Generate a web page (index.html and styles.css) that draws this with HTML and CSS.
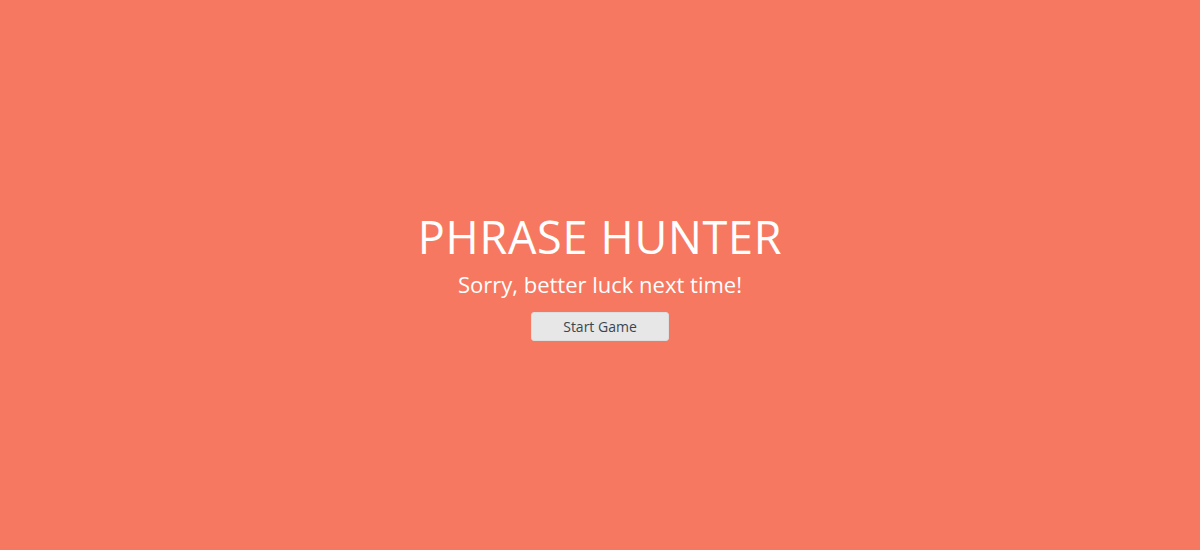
FILE: index.html
```html
<!DOCTYPE html>
<html lang="en">
<head>
<meta charset="utf-8">
<title>Phrase Hunter</title>
<link rel="stylesheet" href="styles.css">
</head>
<body>
<div class="overlay">
  <h2 class="title">PHRASE HUNTER</h2>
  <h1 class="message">Sorry, better luck next time!</h1>
  <button class="btn-reset">Start Game</button>
</div>
</body>
</html>
```

FILE: styles.css
```css
html, body {
  margin: 0;
  padding: 0;
  height: 100%;
}
body {
  font-family: "Open Sans", "Liberation Sans", sans-serif;
  background: #f67860;
}
.overlay {
  height: 100%;
  display: flex;
  flex-direction: column;
  align-items: center;
  justify-content: center;
  background: #f67860;
  color: #fff;
}
.title {
  margin: 2px 0 0;
  font-weight: 400;
  font-size: 45px;
  line-height: 52px;
  letter-spacing: 0.7px;
}
.message {
  margin: 8px 0 0;
  font-weight: 400;
  font-size: 22px;
  line-height: 27px;
  letter-spacing: 0;
}
.btn-reset {
  margin-top: 14px;
  width: 138px;
  height: 29px;
  border: 1px solid #dedede;
  border-radius: 3px;
  background: #e7e7e7;
  color: #3b4551;
  font-family: inherit;
  font-size: 14px;
  padding: 0;
}
```
